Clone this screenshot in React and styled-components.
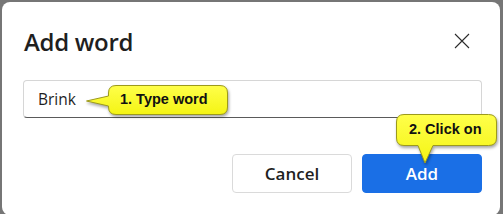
import React from "react";
import styled, { createGlobalStyle } from "styled-components";

const Global = createGlobalStyle`
  html, body {
    margin: 0;
    padding: 0;
    background: #767676;
    width: 503px;
    height: 214px;
    overflow: hidden;
  }
  * { box-sizing: border-box; }
`;

const Dialog = styled.div`
  margin: 2px 3px 0 2px;
  height: 213px;
  background: #ffffff;
  border-radius: 8px;
  padding: 21px 18px 0 21px;
  display: flex;
  flex-direction: column;
  font-family: "Open Sans", "Noto Sans", sans-serif;
  color: #1b1b1b;
`;

const Header = styled.div`
  height: 36px;
  display: flex;
  align-items: center;
  justify-content: space-between;
`;

const Title = styled.h1`
  margin: 0 0 0 1px;
  font-size: 24px;
  font-weight: 600;
  letter-spacing: -0.3px;
  color: #1f1f1f;
`;

const Close = styled.button`
  width: 30px;
  height: 30px;
  margin-right: 5px;
  border: none;
  background: none;
  padding: 0;
  display: flex;
  align-items: center;
  justify-content: center;
`;

const Field = styled.div`
  position: relative;
  margin-top: 21px;
  height: 38px;
  border: 1px solid #d6d6d6;
  border-bottom: 1px solid #5a5a5a;
  border-radius: 4px;
  display: flex;
  align-items: center;
  padding-left: 14px;
  font-size: 15.5px;
  color: #1f1f1f;
`;

const Footer = styled.div`
  margin-top: 36px;
  display: flex;
  justify-content: flex-end;
  gap: 10px;
`;

const Button = styled.button`
  position: relative;
  width: 120px;
  height: 39px;
  border-radius: 4px;
  font-family: "Open Sans", "Noto Sans", sans-serif;
  font-size: 17px;
  font-weight: 600;
  border: 1px solid ${p => (p.primary ? "#1a6fe6" : "#dadada")};
  background: ${p => (p.primary ? "#1a6fe6" : "#ffffff")};
  color: ${p => (p.primary ? "#ffffff" : "#1f1f1f")};
`;

const Callout = styled.div`
  position: absolute;
  left: ${p => p.x}px;
  top: ${p => p.y}px;
  width: ${p => p.w}px;
  height: ${p => p.h}px;
  z-index: 2;
  svg {
    position: absolute;
    left: 0;
    top: 0;
    overflow: visible;
    filter: drop-shadow(1px 2px 1.5px rgba(0, 0, 0, 0.35));
  }
`;

const CalloutText = styled.span`
  position: absolute;
  left: ${p => p.x}px;
  top: ${p => p.y}px;
  font-family: "Liberation Sans", Arial, sans-serif;
  font-weight: 700;
  font-size: 14.5px;
  color: #111;
  white-space: nowrap;
`;

const Bubble = ({ d, w, h }) => (
  <svg width={w} height={h}>
    <defs>
      <linearGradient id="yl" x1="0" y1="0" x2="0" y2="1">
        <stop offset="0" stopColor="#ffff4a" />
        <stop offset="1" stopColor="#f4f414" />
      </linearGradient>
    </defs>
    <path d={d} fill="url(#yl)" stroke="#9c9a1c" strokeWidth="1" />
  </svg>
);

export default function App() {
  return (
    <>
      <Global />
      <Dialog>
        <Header>
          <Title>Add word</Title>
          <Close aria-label="Close">
            <svg width="16" height="16" viewBox="0 0 16 16">
              <path d="M1 1 L15 15 M15 1 L1 15" stroke="#2b2b2b" strokeWidth="1.1" />
            </svg>
          </Close>
        </Header>
        <Field>
          Brink
          <Callout x={62} y={4} w={143} h={31}>
            <Bubble
              w={143}
              h={31}
              d="M30,0.5 H134 Q141.5,0.5 141.5,8 V22 Q141.5,29.5 134,29.5 H30 Q22.5,29.5 22.5,22 V21 L0.5,16 L22.5,11 V8 Q22.5,0.5 30,0.5 Z"
            />
            <CalloutText x={34} y={6}>1. Type word</CalloutText>
          </Callout>
        </Field>
        <Footer>
          <Button>Cancel</Button>
          <Button primary>
            Add
            <Callout x={33} y={-41} w={101} h={51}>
              <Bubble
                w={101}
                h={51}
                d="M8,0.5 H92.5 Q100.5,0.5 100.5,8 V24 Q100.5,31.5 92.5,31.5 H37 L29,49 L22,31.5 H8 Q0.5,31.5 0.5,24 V8 Q0.5,0.5 8,0.5 Z"
              />
              <CalloutText x={13} y={7}>2. Click on</CalloutText>
            </Callout>
          </Button>
        </Footer>
      </Dialog>
    </>
  );
}
